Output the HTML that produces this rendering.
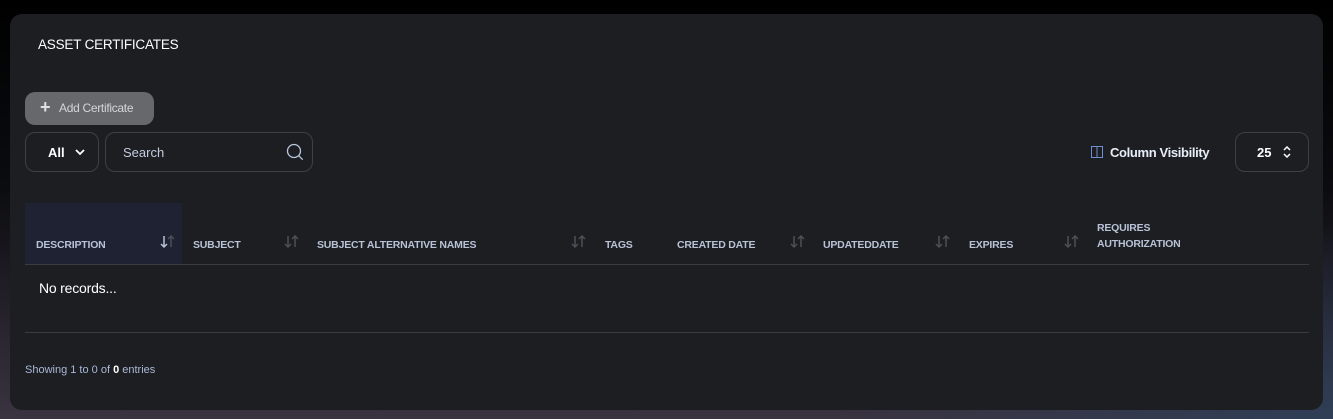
<!DOCTYPE html>
<html><head><style>
*{margin:0;padding:0;box-sizing:border-box}
body{width:1333px;height:419px;overflow:hidden;font-family:"Liberation Sans",sans-serif;background:linear-gradient(180deg,#000 0%,#0c0c10 45%,#2a2530 80%,#3a3340 100%);position:relative}
body:after{content:"";position:absolute;right:0;bottom:0;width:500px;height:200px;background:radial-gradient(ellipse at 100% 100%,rgba(40,70,100,.6),transparent 70%)}
.card{position:absolute;left:10px;top:14px;width:1313px;height:396px;background:#1d1e22;border-radius:12px;z-index:1}
.a{position:absolute}
.title{left:28px;top:23px;color:#fff;font-size:13.5px;letter-spacing:-.2px}
.btn{left:15px;top:78px;width:129px;height:33px;background:#66686c;border-radius:10px;color:#d4d5d8;font-size:12px;line-height:33px;padding-left:34px;letter-spacing:-.3px}
.btn:before{content:"+";position:absolute;left:15px;top:-1px;font-size:18px;font-weight:bold;color:#e0e0e0}
.box{border:1px solid #3f4045;border-radius:10px;height:40px}
.th{top:223px;font-size:10.5px;font-weight:bold;color:#b8c2d6;line-height:16px;letter-spacing:-.2px}
.sort{top:221px}
</style></head><body>
<div class="card">
<div class="a title">ASSET CERTIFICATES</div>
<div class="a btn">Add Certificate</div>
<div class="a box" style="left:15px;top:118px;width:74px"><span class="a" style="left:22px;top:12px;color:#fff;font-weight:bold;font-size:13px">All</span>
<svg class="a" style="left:49px;top:15px" width="10" height="8"><path d="M1 2l4 4 4-4" stroke="#fff" stroke-width="1.8" fill="none"/></svg></div>
<div class="a box" style="left:95px;top:118px;width:208px"><span class="a" style="left:17px;top:12px;color:#c4cde0;font-size:13px">Search</span>
<svg class="a" style="left:180px;top:10px" width="18" height="18"><circle cx="8" cy="8" r="6.5" stroke="#b8c6e0" stroke-width="1.3" fill="none"/><path d="M12.7 12.7l4 4" stroke="#b8c6e0" stroke-width="1.3"/></svg></div>
<svg class="a" style="left:1081px;top:132px" width="12" height="12"><rect x=".5" y=".5" width="11" height="11" stroke="#6f8fd0" fill="none"/><path d="M6 0v12" stroke="#6f8fd0"/></svg>
<div class="a" style="left:1100px;top:131px;color:#e8eef8;font-weight:bold;font-size:13px;letter-spacing:-.35px">Column Visibility</div>
<div class="a box" style="left:1225px;top:118px;width:74px"><span class="a" style="left:21px;top:12px;color:#fff;font-weight:bold;font-size:13px">25</span>
<svg class="a" style="left:47px;top:13px" width="8" height="12"><path d="M1 4l3-3 3 3M1 8l3 3 3-3" stroke="#fff" stroke-width="1.5" fill="none"/></svg></div>
<div class="a" style="left:15px;top:189px;width:157px;height:61px;background:#1e2232"></div>
<div class="a th" style="left:26px">DESCRIPTION</div>
<div class="a th" style="left:183px">SUBJECT</div>
<div class="a th" style="left:307px">SUBJECT ALTERNATIVE NAMES</div>
<div class="a th" style="left:595px">TAGS</div>
<div class="a th" style="left:667px">CREATED DATE</div>
<div class="a th" style="left:813px">UPDATEDDATE</div>
<div class="a th" style="left:959px">EXPIRES</div>
<div class="a th" style="left:1087px;top:206px">REQUIRES<br>AUTHORIZATION</div>
<svg width="0" height="0" style="position:absolute"><defs>
<g id="s"><path d="M4 1v11M1 9l3 3 3-3" stroke="var(--d)" stroke-width="1.5" fill="none"/><path d="M11 12V1M8 4l3-3 3 3" stroke="#4c5058" stroke-width="1.5" fill="none"/></g></defs></svg>
<svg class="a sort" style="left:150px;--d:#b8c2d6" width="15" height="14"><use href="#s"/></svg>
<svg class="a sort" style="left:274px;--d:#4c5058" width="15" height="14"><use href="#s"/></svg>
<svg class="a sort" style="left:561px;--d:#4c5058" width="15" height="14"><use href="#s"/></svg>
<svg class="a sort" style="left:780px;--d:#4c5058" width="15" height="14"><use href="#s"/></svg>
<svg class="a sort" style="left:925px;--d:#4c5058" width="15" height="14"><use href="#s"/></svg>
<svg class="a sort" style="left:1054px;--d:#4c5058" width="15" height="14"><use href="#s"/></svg>
<div class="a" style="left:15px;top:250px;width:1284px;height:1px;background:#3a3b40"></div>
<div class="a" style="left:29px;top:266px;color:#fff;font-size:14px;letter-spacing:-.2px">No records...</div>
<div class="a" style="left:15px;top:318px;width:1284px;height:1px;background:#3a3b40"></div>
<div class="a" style="left:15px;top:350px;color:#a9b8d6;font-size:11px">Showing 1 to 0 of <b style="color:#fff">0</b> entries</div>
</div>
</body></html>
